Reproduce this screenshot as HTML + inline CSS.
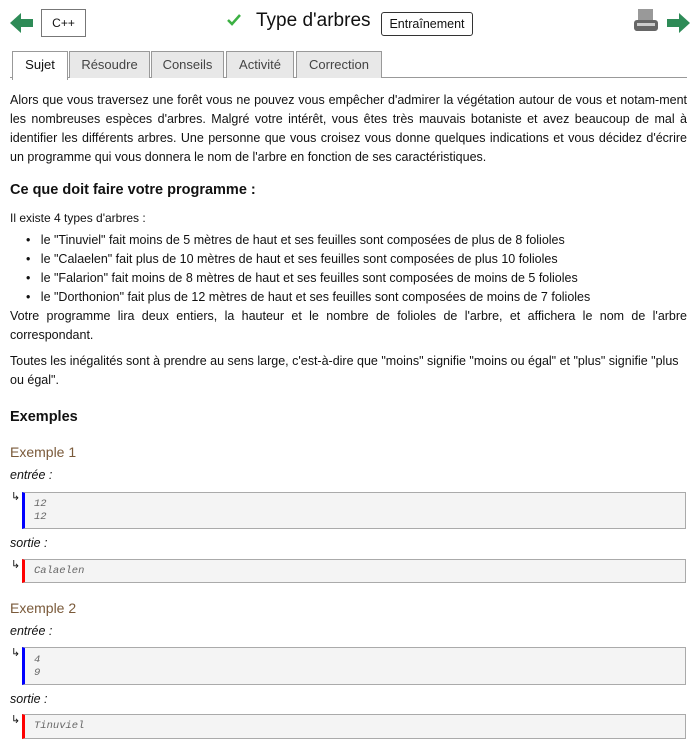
<!DOCTYPE html>
<html><head><meta charset="utf-8"><style>
body{margin:0;width:697px;height:751px;background:#fff;font-family:"Liberation Sans",sans-serif;font-size:12.5px;color:#111;position:relative;overflow:hidden}
.a{position:absolute}
p{margin:0}
.tab{position:absolute;top:51px;height:26px;border:1px solid #999;border-bottom:none;background:#e8e8e8;color:#444;font-size:13px;text-align:center;line-height:26px}
.box{position:absolute;left:22px;width:664px;background:#f4f4f4;border:1px solid #aaa;font-family:"Liberation Mono",monospace;font-style:italic;font-size:10.5px;color:#666;padding-left:9px;box-sizing:border-box;line-height:13px}
.arr{position:absolute;left:11px;font-size:11px}
.lab{position:absolute;left:10px;font-style:italic;font-size:12.5px}
.ex{position:absolute;left:10px;font-size:14px;color:#7a5a3a}
</style></head><body>
<svg class="a" style="left:10px;top:12px" width="24" height="22"><polygon points="0,11 11,1 11,7 23,7 23,15 11,15 11,21" fill="#2e8b57"/></svg>
<div class="a" style="left:41px;top:9px;width:43px;height:26px;border:1px solid #777;text-align:center;line-height:26px;font-size:12px">C++</div>
<svg class="a" style="left:226px;top:13px" width="16" height="14"><path d="M2 7 L6 11 L14 2" stroke="#3cb043" stroke-width="2.5" fill="none"/></svg>
<div class="a" style="left:256px;top:10px;font-size:19px">Type d'arbres</div>
<div class="a" style="left:381px;top:12px;width:90px;height:22px;border:1px solid #333;border-radius:3px;text-align:center;line-height:22px;font-size:12.5px">Entraînement</div>
<svg class="a" style="left:633px;top:9px" width="26" height="24"><rect x="5" y="0" width="15" height="12" fill="#999"/><rect x="1" y="11" width="24" height="11" rx="3" fill="#666"/><rect x="4" y="14" width="18" height="3" fill="#ccc"/></svg>
<svg class="a" style="left:667px;top:12px" width="24" height="22"><polygon points="23,11 12,1 12,7 0,7 0,15 12,15 12,21" fill="#2e8b57"/></svg>
<div class="a" style="left:10px;top:77px;width:677px;border-top:1px solid #999"></div>
<div class="tab" style="left:12px;width:54px;background:#fff;color:#111;height:28px">Sujet</div>
<div class="tab" style="left:69px;width:79px">Résoudre</div>
<div class="tab" style="left:151px;width:71px">Conseils</div>
<div class="tab" style="left:226px;width:66px">Activité</div>
<div class="tab" style="left:296px;width:84px">Correction</div>
<p class="a" style="left:10px;top:91px;width:677px;text-align:justify;line-height:19px">Alors que vous traversez une forêt vous ne pouvez vous empêcher d'admirer la végétation autour de vous et notam-ment les nombreuses espèces d'arbres. Malgré votre intérêt, vous êtes très mauvais botaniste et avez beaucoup de mal à identifier les différents arbres. Une personne que vous croisez vous donne quelques indications et vous décidez d'écrire un programme qui vous donnera le nom de l'arbre en fonction de ses caractéristiques.</p>
<div class="a" style="left:10px;top:182px;font-weight:bold;font-size:14.5px">Ce que doit faire votre programme :</div>
<p class="a" style="left:10px;top:211px;font-size:12px">Il existe 4 types d'arbres :</p>
<div class="a" style="left:26px;top:231px;line-height:19px">
• &nbsp;&nbsp;le "Tinuviel" fait moins de 5 mètres de haut et ses feuilles sont composées de plus de 8 folioles<br>
• &nbsp;&nbsp;le "Calaelen" fait plus de 10 mètres de haut et ses feuilles sont composées de plus 10 folioles<br>
• &nbsp;&nbsp;le "Falarion" fait moins de 8 mètres de haut et ses feuilles sont composées de moins de 5 folioles<br>
• &nbsp;&nbsp;le "Dorthonion" fait plus de 12 mètres de haut et ses feuilles sont composées de moins de 7 folioles</div>
<p class="a" style="left:10px;top:307px;width:677px;text-align:justify;line-height:19px">Votre programme lira deux entiers, la hauteur et le nombre de folioles de l'arbre, et affichera le nom de l'arbre correspondant.</p>
<p class="a" style="left:10px;top:352px;width:677px;line-height:19px">Toutes les inégalités sont à prendre au sens large, c'est-à-dire que "moins" signifie "moins ou égal" et "plus" signifie "plus ou égal".</p>
<div class="a" style="left:10px;top:409px;font-weight:bold;font-size:14.5px">Exemples</div>
<div class="ex" style="top:444px">Exemple 1</div>
<div class="lab" style="top:468px">entrée :</div>
<div class="arr" style="top:490px">↳</div>
<div class="box" style="top:492px;height:37px;border-left:3px solid #00f;padding-top:5px">12<br>12</div>
<div class="lab" style="top:536px">sortie :</div>
<div class="arr" style="top:558px">↳</div>
<div class="box" style="top:559px;height:24px;border-left:3px solid #f00;line-height:22px">Calaelen</div>
<div class="ex" style="top:600px">Exemple 2</div>
<div class="lab" style="top:624px">entrée :</div>
<div class="arr" style="top:646px">↳</div>
<div class="box" style="top:647px;height:38px;border-left:3px solid #00f;padding-top:6px">4<br>9</div>
<div class="lab" style="top:692px">sortie :</div>
<div class="arr" style="top:713px">↳</div>
<div class="box" style="top:714px;height:25px;border-left:3px solid #f00;line-height:23px">Tinuviel</div>
</body></html>
